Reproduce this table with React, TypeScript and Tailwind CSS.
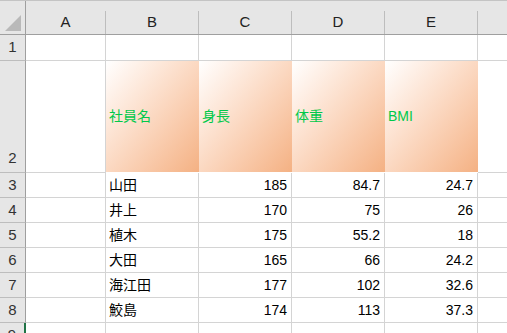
import React from 'react';

const cols = ['A', 'B', 'C', 'D', 'E'];
const widths = ['w-[80px]', 'w-[93px]', 'w-[93px]', 'w-[93px]', 'w-[93px]'];

const rows: [string, string, string, string][] = [
  ['山田', '185', '84.7', '24.7'],
  ['井上', '170', '75', '26'],
  ['植木', '175', '55.2', '18'],
  ['大田', '165', '66', '24.2'],
  ['海江田', '177', '102', '32.6'],
  ['鮫島', '174', '113', '37.3'],
];

const headLabels = ['社員名', '身長', '体重', 'BMI'];

const font = { fontFamily: '"Liberation Sans", "Noto Sans CJK JP", sans-serif' };

const RowHead = ({ n, h, bottom = false, active = false }: { n: string; h: string; bottom?: boolean; active?: boolean }) => (
  <div
    className={`w-[26px] ${h} shrink-0 bg-[#e6e6e6] border-b border-[#bdbdbd] border-r ${active ? 'border-r-[#217346] border-r-2 w-[26px]' : 'border-r-[#9f9f9f]'} flex justify-center text-[15px] text-[#333] ${bottom ? 'items-end pb-[3px]' : 'items-center'}`}
  >
    {n}
  </div>
);

const App: React.FC = () => {
  return (
    <div className="w-[507px] h-[333px] overflow-hidden bg-white" style={font}>
      {/* column headers */}
      <div className="flex h-[35px] bg-[#e6e6e6] border-t border-[#c4c4c4] border-b border-b-[#9f9f9f]">
        <div className="w-[26px] shrink-0 border-r border-[#9f9f9f] flex items-end justify-center pb-[2px]">
          <svg width="18" height="18" viewBox="0 0 18 18">
            <polygon points="17,1 17,17 1,17" fill="#b9b9b9" />
          </svg>
        </div>
        {cols.map((c, i) => (
          <div key={c} className={`${widths[i]} shrink-0 flex flex-col`}>
            <div className="h-[10px]" />
            <div className="flex-1 border-r border-[#bdbdbd] flex items-center justify-center text-[15px] text-[#222]">
              {c}
            </div>
          </div>
        ))}
        <div className="flex-1" />
      </div>

      {/* row 1 */}
      <div className="flex h-[26px]">
        <RowHead n="1" h="h-[26px]" />
        {cols.map((c, i) => (
          <div key={c} className={`${widths[i]} shrink-0 border-r border-b border-[#d4d4d4]`} />
        ))}
        <div className="flex-1 border-b border-[#d4d4d4]" />
      </div>

      {/* row 2 */}
      <div className="flex h-[112px]">
        <RowHead n="2" h="h-[112px]" bottom />
        <div className="w-[80px] shrink-0 border-r border-b border-[#d4d4d4]" />
        {headLabels.map((l, i) => (
          <div
            key={l}
            className={`${widths[i + 1]} shrink-0 h-[111px] bg-gradient-to-br from-white to-[#f4b183] flex items-center pl-[3px] text-[14px] text-[#00c94a]`}
          >
            {l}
          </div>
        ))}
        <div className="flex-1 border-b border-[#d4d4d4]" />
      </div>

      {/* data rows */}
      {rows.map((r, ri) => (
        <div key={ri} className="flex h-[25px]">
          <RowHead n={String(ri + 3)} h="h-[25px]" />
          <div className="w-[80px] shrink-0 border-r border-b border-[#d4d4d4]" />
          <div className="w-[93px] shrink-0 border-r border-b border-[#d4d4d4] flex items-center pl-[3px] text-[14px] text-black">
            {r[0]}
          </div>
          {r.slice(1).map((v, vi) => (
            <div
              key={vi}
              className="w-[93px] shrink-0 border-r border-b border-[#d4d4d4] flex items-center justify-end pr-[4px] text-[14px] text-black"
            >
              {v}
            </div>
          ))}
          <div className="flex-1 border-b border-[#d4d4d4]" />
        </div>
      ))}

      {/* row 9 (partial) */}
      <div className="flex h-[25px]">
        <RowHead n="9" h="h-[25px]" active />
        {cols.map((c, i) => (
          <div key={c} className={`${widths[i]} shrink-0 border-r border-b border-[#d4d4d4]`} />
        ))}
        <div className="flex-1 border-b border-[#d4d4d4]" />
      </div>
    </div>
  );
};

export default App;
